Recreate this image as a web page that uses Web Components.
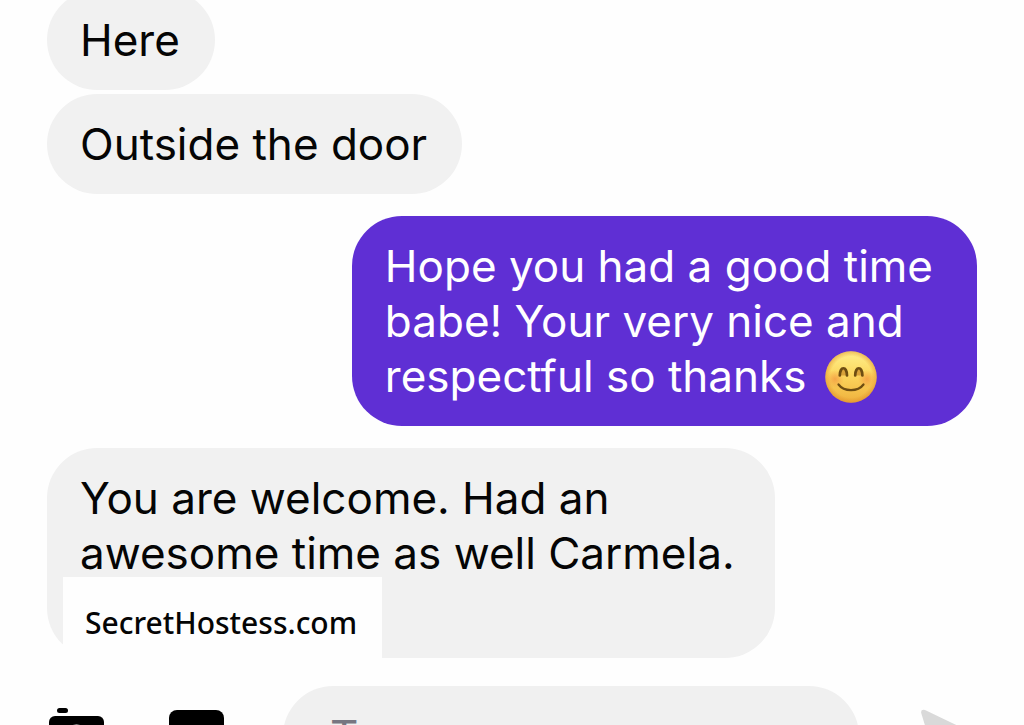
<!DOCTYPE html>
<html lang="en">
<head>
<meta charset="utf-8">
<title>Chat</title>
<style>
  html, body { height: 100%; }
  body { margin: 0; overflow: hidden; background: #fefefe; color: #050505; font-family: Inter, "Liberation Sans", sans-serif; font-size: 44px; line-height: 55px; }
</style>
</head>
<body>
<chat-screen>
  <chat-bubble>Here</chat-bubble>
  <chat-bubble>Outside the door</chat-bubble>
  <chat-bubble class="turn" side="out">Hope you had a good time<br>babe! Your very nice and<br>respectful so thanks <smile-emoji></smile-emoji></chat-bubble>
  <chat-bubble class="turn" size="wide">You are welcome. Had an<br>awesome time as well Carmela.<site-label slot="overlay">SecretHostess.com</site-label></chat-bubble>
  <chat-composer slot="composer"></chat-composer>
</chat-screen>
<script>
function define(name, html) {
  const template = document.createElement('template');
  template.innerHTML = html;
  customElements.define(name, class extends HTMLElement {
    constructor() {
      super();
      this.attachShadow({ mode: 'open' }).append(template.content.cloneNode(true));
    }
  });
}

define('smile-emoji', `
  <style>
    :host { display: inline-block; width: 52px; height: 52px; margin: 2px 0 0 6px; vertical-align: top; line-height: 0; }
    svg { width: 100%; height: 100%; display: block; }
  </style>
  <svg viewBox="0 0 52 52" role="img" aria-label="Smiling face with smiling eyes">
    <defs>
      <linearGradient id="face" x1="0" y1="0" x2="0" y2="1">
        <stop offset="0" stop-color="#fff08c"/><stop offset=".45" stop-color="#fcd75f"/><stop offset="1" stop-color="#efb03c"/>
      </linearGradient>
      <radialGradient id="edge"><stop offset=".8" stop-color="#d97e22" stop-opacity="0"/><stop offset="1" stop-color="#d97e22" stop-opacity=".45"/></radialGradient>
      <radialGradient id="blush"><stop offset="0" stop-color="#f28a3c" stop-opacity=".6"/><stop offset="1" stop-color="#f28a3c" stop-opacity="0"/></radialGradient>
    </defs>
    <circle cx="26" cy="26" r="25.700" fill="url(#face)"/>
    <circle cx="26" cy="26" r="25.700" fill="url(#edge)"/>
    <circle cx="10" cy="28" r="9" fill="url(#blush)"/><circle cx="42" cy="28" r="9" fill="url(#blush)"/>
    <path d="M14.800 24.500C15 14.800 21.800 14.800 22 24.500M30.200 24.500C30.400 14.800 37.200 14.800 37.400 24.500" fill="#d9a23a" stroke="#6e4d12" stroke-width="2.700" stroke-linecap="round"/>
    <path d="M13.500 33.500C19 41 33 41 38.500 33.500" fill="none" stroke="#6e4d12" stroke-width="2.200" stroke-linecap="round"/>
  </svg>`);

define('site-label', `
  <style>
    :host { display: block; padding: 19px 25px 20px 22px; background: #fefefe; color: #050505; font: 500 30px/54px "Noto Sans", "Open Sans", sans-serif; white-space: nowrap; }
  </style>
  <slot></slot>`);

define('chat-bubble', `
  <style>
    :host { display: block; position: relative; box-sizing: border-box; align-self: flex-start; padding: 23px 35px 22px 33px; border-radius: 50px; background: #f1f1f1; white-space: nowrap; }
    :host([side="out"]) { align-self: flex-end; padding-right: 44px; background: #5f2fd4; color: #fff; }
    :host([size="wide"]) { padding-right: 40px; min-height: 210px; }
    slot[name="overlay"] { display: block; position: absolute; left: 16px; top: 129px; }
  </style>
  <slot></slot><slot name="overlay"></slot>`);

define('chat-composer', `
  <style>
    :host { display: flex; align-items: center; gap: 60px; }
    button { flex: none; width: 58px; height: 58px; margin: 0; padding: 0; border: 0; background: none; color: #000; }
    button.send { color: #d9d9d9; }
    svg { display: block; width: 58px; height: 58px; overflow: visible; }
    input { flex: 1; min-width: 0; height: 100px; box-sizing: border-box; margin: 0; padding: 0 47px; border: 0; border-radius: 50px; outline: 0; background: #f0f0f0; color: inherit; font: inherit; }
    input::placeholder { color: #777681; opacity: 1; }
  </style>
  <button type="button" aria-label="Camera"><svg viewBox="0 0 58 58">
    <rect x="10" y="1" width="11" height="5" rx="2.500" fill="currentColor"/>
    <rect x="2" y="9" width="55" height="42" rx="6" fill="currentColor"/>
    <circle cx="29.500" cy="30.500" r="11.500" fill="none" stroke="#fff" stroke-width="3"/>
  </svg></button>
  <button type="button" aria-label="Gallery"><svg viewBox="0 0 58 58">
    <rect x="4" y="3" width="55" height="53" rx="8" fill="currentColor"/>
    <path d="M12 46l13-17 9 11 6-7 11 13z" fill="#fff"/>
  </svg></button>
  <input type="text" aria-label="Message" placeholder="Type">
  <button type="button" class="send" aria-label="Send"><svg viewBox="0 0 58 58">
    <path d="M2.200 6Q1.500 2 6 3L56 27Q59 29 56 31L6 55Q1.500 57 2.200 52L8 33L34 29L8 25Z" fill="currentColor"/>
  </svg></button>`);

define('chat-screen', `
  <style>
    :host { display: block; padding: 0 47px; }
    main { display: flex; flex-direction: column; gap: 4px; margin-top: -10px; }
    ::slotted(.turn) { margin-top: 18px; }
    footer { margin-top: 28px; }
  </style>
  <main><slot></slot></main>
  <footer><slot name="composer"></slot></footer>`);
</script>
</body>
</html>
